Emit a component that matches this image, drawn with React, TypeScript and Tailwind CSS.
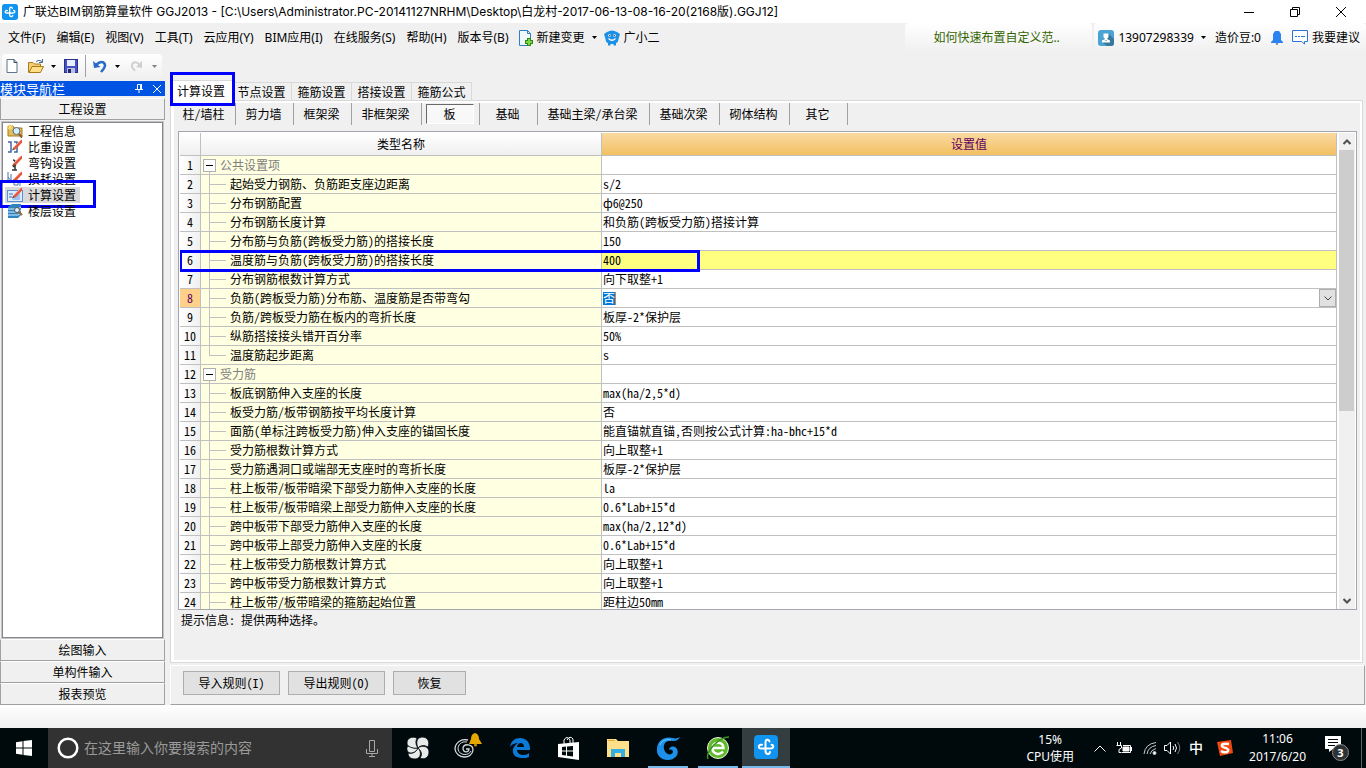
import type { ReactNode } from 'react';

type Row = { name: string; value?: string; group?: boolean; last?: boolean; marked?: boolean; editing?: boolean };

const menus = ['文件(F)', '编辑(E)', '视图(V)', '工具(T)', '云应用(Y)', 'BIM应用(I)', '在线服务(S)', '帮助(H)', '版本号(B)'];

const pages = ['节点设置', '箍筋设置', '搭接设置', '箍筋公式'];

const members = [
    { label: '柱/墙柱', width: 'w-[62px]' },
    { label: '剪力墙', width: 'w-[58px]' },
    { label: '框架梁', width: 'w-[58px]' },
    { label: '非框架梁', width: 'w-[70px]' },
    { label: '板', width: 'w-[58px]' },
    { label: '基础', width: 'w-[58px]' },
    { label: '基础主梁/承台梁', width: 'w-[112px]' },
    { label: '基础次梁', width: 'w-[70px]' },
    { label: '砌体结构', width: 'w-[70px]' },
    { label: '其它', width: 'w-[58px]' },
];

const rows: Row[] = [
    { name: '公共设置项', group: true },
    { name: '起始受力钢筋、负筋距支座边距离', value: 's/2' },
    { name: '分布钢筋配置', value: 'ф6@250' },
    { name: '分布钢筋长度计算', value: '和负筋(跨板受力筋)搭接计算' },
    { name: '分布筋与负筋(跨板受力筋)的搭接长度', value: '150' },
    { name: '温度筋与负筋(跨板受力筋)的搭接长度', value: '400', marked: true },
    { name: '分布钢筋根数计算方式', value: '向下取整+1' },
    { name: '负筋(跨板受力筋)分布筋、温度筋是否带弯勾', value: '否', editing: true },
    { name: '负筋/跨板受力筋在板内的弯折长度', value: '板厚-2*保护层' },
    { name: '纵筋搭接接头错开百分率', value: '50%' },
    { name: '温度筋起步距离', value: 's', last: true },
    { name: '受力筋', group: true },
    { name: '板底钢筋伸入支座的长度', value: 'max(ha/2,5*d)' },
    { name: '板受力筋/板带钢筋按平均长度计算', value: '否' },
    { name: '面筋(单标注跨板受力筋)伸入支座的锚固长度', value: '能直锚就直锚,否则按公式计算:ha-bhc+15*d' },
    { name: '受力筋根数计算方式', value: '向上取整+1' },
    { name: '受力筋遇洞口或端部无支座时的弯折长度', value: '板厚-2*保护层' },
    { name: '柱上板带/板带暗梁下部受力筋伸入支座的长度', value: 'la' },
    { name: '柱上板带/板带暗梁上部受力筋伸入支座的长度', value: '0.6*Lab+15*d' },
    { name: '跨中板带下部受力筋伸入支座的长度', value: 'max(ha/2,12*d)' },
    { name: '跨中板带上部受力筋伸入支座的长度', value: '0.6*Lab+15*d' },
    { name: '柱上板带受力筋根数计算方式', value: '向上取整+1' },
    { name: '跨中板带受力筋根数计算方式', value: '向上取整+1' },
    { name: '柱上板带/板带暗梁的箍筋起始位置', value: '距柱边50mm' },
];

function Caret({ className = 'text-black' }: { className?: string }) {
    return (
        <svg viewBox="0 0 5 3" className={`h-[3px] w-[5px] ${className}`} fill="currentColor">
            <path d="M0 0H5L2.5 3Z" />
        </svg>
    );
}

function GldLogo({ className }: { className: string }) {
    return (
        <svg viewBox="0 0 24 24" className={className} fill="none">
            <rect width="24" height="24" rx="4" fill="#1193f0" />
            <g stroke="#fff" strokeWidth="2" strokeLinecap="round">
                <path d="M15.500 6.500C15 4 11.500 4 11.500 7.500V16C11.500 19.500 15.500 20 16 17" />
                <path d="M8 9.800C4.500 9 3.500 13.500 7 13.500H16.500C20 13.500 20 10 17.500 9.800" />
            </g>
        </svg>
    );
}

function Pencil() {
    return (
        <g>
            <path d="M6 9L12 2.500L15 0.500V3.500L9 10Z" fill="#e8553a" />
            <path d="M7 8L13 2" stroke="#f7a48c" />
            <path d="M6 9L5 11.500L9 10Z" fill="#7b3a20" />
        </g>
    );
}

const navItems: { label: string; icon: ReactNode; active?: boolean }[] = [
    {
        label: '工程信息',
        icon: (
            <>
                <path d="M1 3H6L7 5H15V13H1Z" fill="#e6bd55" stroke="#a77a20" />
                <path d="M3 1V7M0 4H6M1 2L5 6M5 2L1 6" stroke="#ffe37a" />
                <circle cx="9.500" cy="8" r="3.500" fill="#d5ecfa" stroke="#4f6c86" />
                <path d="M12 11L15 14.500" stroke="#8a5a2a" strokeWidth="2" />
            </>
        ),
    },
    {
        label: '比重设置',
        icon: (
            <>
                <path d="M1 3H4V13H1M7 3H10V13H7" stroke="#3f66a8" fill="none" strokeWidth="1.500" />
                <Pencil />
            </>
        ),
    },
    {
        label: '弯钩设置',
        icon: (
            <>
                <path d="M6 5C9 5 8 8 8 9V15M5 15H10M6 12L9 10" stroke="#333" fill="none" strokeWidth="1.500" />
                <Pencil />
            </>
        ),
    },
    {
        label: '损耗设置',
        icon: (
            <>
                <path d="M1 1V12M1 6L4 10V3M7 8V14H11V10M13 9V15" stroke="#4d72a8" fill="none" />
                <Pencil />
            </>
        ),
    },
    {
        label: '计算设置',
        active: true,
        icon: (
            <>
                <rect x="0.500" y="3.500" width="15" height="11" fill="#dcecff" stroke="#5f8fd0" />
                <path d="M2 7H6M2 10H5" stroke="#3a6ebc" />
                <path d="M7 11L13 6V13H5" fill="#9cc2f1" />
                <Pencil />
            </>
        ),
    },
    {
        label: '楼层设置',
        icon: (
            <>
                <path d="M1 4L5 1H14V12L11 15H1Z" fill="#2f84c0" />
                <path d="M1 6H11L14 4M1 9H11L14 7M1 12H11L14 10" stroke="#d6efff" fill="none" />
                <circle cx="10" cy="7" r="2.500" fill="#e4f4ff" stroke="#555" />
                <path d="M12 9L15 12" stroke="#a2652a" strokeWidth="2" />
            </>
        ),
    },
];

function TitleBar() {
    return (
        <header className="flex h-[23px] shrink-0 items-center bg-white pl-0.5 pr-0.5">
            <GldLogo className="h-4 w-4" />
            <h1 className="ml-[5px] flex-1 truncate font-['Inter','Noto_Sans_CJK_SC',sans-serif] text-xs">
                广联达BIM钢筋算量软件 GGJ2013 - [C:\Users\Administrator.PC-20141127NRHM\Desktop\白龙村-2017-06-13-08-16-20(2168版).GGJ12]
            </h1>
            <button aria-label="最小化" className="flex w-[46px] justify-center">
                <svg viewBox="0 0 10 10" className="h-2.5 w-2.5" stroke="#000" fill="none">
                    <path d="M0 5.500H10" />
                </svg>
            </button>
            <button aria-label="还原" className="flex w-[46px] justify-center">
                <svg viewBox="0 0 10 10" className="h-2.5 w-2.5" stroke="#000" fill="none">
                    <path d="M0.500 2.500H7.500V9.500H0.500ZM2.500 2.500V0.500H9.500V7.500H7.500" />
                </svg>
            </button>
            <button aria-label="关闭" className="flex w-[46px] justify-center">
                <svg viewBox="0 0 10 10" className="h-2.5 w-2.5" stroke="#000" fill="none">
                    <path d="M0 0L10 10M10 0L0 10" />
                </svg>
            </button>
        </header>
    );
}

function MenuBar() {
    return (
        <div className="flex h-[29px] shrink-0 items-center text-xs">
            <nav className="flex items-center gap-[11px] whitespace-nowrap pl-2">
                {menus.map((menu) => (
                    <button key={menu}>{menu}</button>
                ))}
            </nav>
            <button className="ml-[9px] flex items-center whitespace-nowrap">
                <svg viewBox="0 0 16 16" className="h-4 w-4" fill="none">
                    <path d="M1.500 0.500H9.500L12.500 3.500V15.500H1.500Z" fill="#f0f8ff" stroke="#2f7fc0" />
                    <path d="M9.500 0.500V3.500H12.500" stroke="#2f7fc0" />
                    <path d="M11 8V16M7 12H15" stroke="#2f8a14" strokeWidth="4" />
                    <path d="M11 9V15M8 12H14" stroke="#7fd44a" strokeWidth="2" />
                </svg>
                <span className="ml-[3px]">新建变更</span>
            </button>
            <button aria-label="更多变更" className="ml-[7px]">
                <Caret />
            </button>
            <button className="ml-[7px] flex items-center whitespace-nowrap">
                <svg viewBox="0 0 16 16" className="h-4 w-4" fill="none">
                    <path d="M3 2Q8 -1 13 2L16 4L14.500 9Q14 13 12 13V15.500H9.500V14H6.500V15.500H4V13Q2 13 1.500 9L0 4Z" fill="#1d8fe6" />
                    <path d="M4.500 8.500Q8 12 11.500 8.500" stroke="#fff" strokeWidth="1.200" />
                    <circle cx="5.500" cy="5.500" r="1.300" fill="#fff" />
                    <circle cx="10.500" cy="5.500" r="1.300" fill="#fff" />
                    <circle cx="5.700" cy="5.600" r="0.700" fill="#123" />
                    <circle cx="10.300" cy="5.600" r="0.700" fill="#123" />
                </svg>
                <span className="ml-1">广小二</span>
            </button>
            <div className="ml-auto mr-0.5 flex h-full w-[187px] items-center rounded-t bg-linear-to-b from-white to-[#f0f0f0] pl-7">
                <a href="#tips" className="text-[#336600]">如何快速布置自定义范..</a>
            </div>
            <div className="flex h-full items-center whitespace-nowrap rounded-t bg-linear-to-b from-white to-[#f0f0f0] pl-1 pr-1.5">
                <svg viewBox="0 0 16 16" className="h-4 w-4">
                    <rect width="16" height="16" rx="3" fill="#4ba3d4" />
                    <path d="M10 3L16 9V13Q16 16 13 16H9L4 12Z" fill="#36789e" />
                    <path d="M5.500 3.500H10.500V7L9 9L12 10.500V12.500H4V10.500L7 9L5.500 7Z" fill="#fff" />
                    <path d="M7 10H9L8 11Z" fill="#36789e" />
                </svg>
                <button className="ml-1 flex items-center gap-[7px]">
                    13907298339
                    <Caret />
                </button>
                <span className="ml-[9px]">造价豆:0</span>
                <svg viewBox="0 0 12 14" className="ml-2.5 h-3.5 w-3" fill="#2a83f0">
                    <path d="M4 0H8L10 3V9L12 11V12H0V11L2 9V3Z" />
                    <path d="M4.500 12.500H7.500L6 14Z" fill="#123d80" />
                </svg>
                <svg viewBox="0 0 16 15" className="ml-[9px] h-[15px] w-4" fill="none" stroke="#2a75d5">
                    <path d="M0.500 0.500H15.500V11.500H12.500V14L9.500 11.500H0.500Z" fill="#fff" />
                    <path d="M3 6.500H5M6 6.500H8M9 6.500H13" />
                </svg>
                <a href="#feedback" className="ml-1">我要建议</a>
            </div>
        </div>
    );
}

function Toolbar() {
    return (
        <div className="flex h-7 shrink-0 items-center pl-0.5">
            <div className="flex h-6 items-center rounded-t bg-linear-to-b from-white to-[#f0f0f0] pl-1 pr-[5px]">
                <button aria-label="新建">
                    <svg viewBox="0 0 12 14" className="h-3.5 w-3" fill="none">
                        <path d="M1 0.500H8L11 3.500V13.500H1Z" fill="#fff" stroke="#5f738c" />
                        <path d="M8 0.500V3.500H11" stroke="#30435c" />
                    </svg>
                </button>
                <button aria-label="打开" className="ml-2.5">
                    <svg viewBox="0 0 16 14" className="h-3.5 w-4" fill="none">
                        <path d="M0.500 13.500V3.500H5L6.500 5H12.500V8" fill="#f2cf70" stroke="#a9791c" />
                        <path d="M1 13.500L4 7.500H15.500L12.500 13.500Z" fill="#ffdf86" stroke="#a9791c" />
                        <path d="M8 2.500Q11 0 14 2.500M14.500 0V3.500H11" stroke="#4a6f9c" />
                    </svg>
                </button>
                <button aria-label="最近文件" className="ml-[7px]">
                    <Caret />
                </button>
                <button aria-label="保存" className="ml-2">
                    <svg viewBox="0 0 14 14" className="h-3.5 w-3.5">
                        <rect x="0.500" y="0.500" width="13" height="13" fill="#4652c4" stroke="#2b2f86" />
                        <rect x="3" y="1" width="8" height="6" fill="#e9eeff" />
                        <rect x="3" y="9" width="8" height="5" fill="#b9c0da" />
                        <rect x="4" y="10" width="3" height="4" fill="#23276b" />
                    </svg>
                </button>
                <span className="ml-[7px] h-[22px] w-px bg-[#a0a0a0]" />
                <button aria-label="撤销" className="ml-[7px]">
                    <svg viewBox="0 0 14 13" className="h-[13px] w-3.5" fill="none">
                        <path d="M3 5Q7 1 10.500 2.500Q13.500 5 10.500 9L8 12" stroke="#2a69c8" strokeWidth="2.500" />
                        <path d="M0 1L1 8L7.500 7Z" fill="#2a69c8" />
                    </svg>
                </button>
                <button aria-label="撤销列表" className="ml-2">
                    <Caret />
                </button>
                <button aria-label="重做" className="ml-2.5">
                    <svg viewBox="0 0 14 13" className="h-[13px] w-3.5" fill="none">
                        <path d="M10 5Q6 1 3 3Q0.500 6 3.500 9L5 11" stroke="#d0d0d0" strokeWidth="2" />
                        <path d="M12 1L12 8L6 7Z" fill="#d0d0d0" />
                    </svg>
                </button>
                <button aria-label="重做列表" className="ml-2">
                    <Caret className="text-[#808080]" />
                </button>
            </div>
        </div>
    );
}

function Sidebar() {
    const section = 'h-[22px] w-full shrink-0 border border-t-white border-l-[#a0a0a0] border-r-[#a0a0a0] border-b-[#a0a0a0]';
    return (
        <aside className="flex w-[165px] shrink-0 flex-col pt-px">
            <div className="flex h-[15px] shrink-0 items-center bg-[#0054e3] text-[13px] leading-[15px] text-white">
                <h2 className="flex-1">模块导航栏</h2>
                <button aria-label="固定" className="mr-2.5">
                    <svg viewBox="0 0 8 9" className="h-[9px] w-2" stroke="#fff" fill="none">
                        <path d="M2.500 5V0.500H5.500V5M6.500 0V5M0 5.500H8M4 6V9" />
                    </svg>
                </button>
                <button aria-label="关闭导航" className="mr-1">
                    <svg viewBox="0 0 8 8" className="h-2 w-2" stroke="#fff">
                        <path d="M0 0L8 8M8 0L0 8" />
                    </svg>
                </button>
            </div>
            <button className={`mt-0.5 ${section}`}>工程设置</button>
            <ul className="mx-0.5 mt-0.5 flex-1 border border-[#828790] bg-white pl-0.5 ring-1 ring-[#c4c4c4]">
                {navItems.map((item) => (
                    <li key={item.label} className="relative flex h-4">
                        <button className={item.active ? 'flex h-4 items-center bg-[#d9d9d9] pl-0.5 pr-1' : 'flex h-4 items-center pl-0.5'}>
                            <svg viewBox="0 0 16 16" className="mr-[5px] h-4 w-4">
                                {item.icon}
                            </svg>
                            {item.label}
                        </button>
                        {item.active && (
                            <span className="pointer-events-none absolute -left-1.5 -top-[7px] h-7 w-[97px] border-3 border-[#0000ff]" />
                        )}
                    </li>
                ))}
            </ul>
            <button className={`mt-px ${section}`}>绘图输入</button>
            <button className={section}>单构件输入</button>
            <button className={section}>报表预览</button>
        </aside>
    );
}

function SettingRow({ row, index }: { row: Row; index: number }) {
    const line = 'border-b border-r border-[#c0c0c0] p-0';
    const valueBg = row.marked ? 'bg-[#ffff80]' : 'bg-white';
    return (
        <tr className="h-[19px]">
            <th
                scope="row"
                className={`${line} text-center font-normal ${row.editing ? 'bg-[#ffd08a] text-[#600060]' : 'bg-linear-to-r from-white to-[#f0f0f0]'}`}
            >
                {index}
            </th>
            <td className={`${line} relative bg-[#ffffe1]`}>
                <div className="flex h-[18px] items-center whitespace-nowrap">
                    {row.group ? (
                        <>
                            <span className="flex h-[18px] w-[15px] flex-col pl-0.5 pt-[3px]">
                                <button aria-label="折叠" className="flex h-[13px] w-[13px] shrink-0 items-center justify-center border border-[#b0b0b0] bg-white">
                                    <span className="h-px w-[7px] bg-black" />
                                </button>
                                <span className="ml-1.5 h-0.5 w-px bg-[#c0c0c0]" />
                            </span>
                            <span className="ml-1 text-[#808080]">{row.name}</span>
                        </>
                    ) : (
                        <>
                            <span className={`ml-2 flex h-[18px] w-[17px] flex-col border-[#c0c0c0] ${row.last ? '' : 'border-l'}`}>
                                <span className={`h-2.5 border-b border-[#c0c0c0] ${row.last ? 'border-l' : ''}`} />
                            </span>
                            <span className="ml-1">{row.name}</span>
                        </>
                    )}
                </div>
                {row.marked && (
                    <span className="pointer-events-none absolute -left-[22px] -right-[99px] -top-px z-10 h-[22px] border-3 border-[#0000ff]" />
                )}
            </td>
            <td className={`${line} ${valueBg}`}>
                {row.editing ? (
                    <div className="flex h-[18px] items-center justify-between pl-px">
                        <input
                            aria-label={row.name}
                            defaultValue={row.value}
                            className="h-[13px] w-[13px] border-r border-[#e08030] bg-[#0078d7] text-xs text-white outline-none"
                        />
                        <button aria-label="展开选项" className="flex h-[18px] w-[17px] items-center justify-center border border-[#adadad] bg-[#e1e1e1]">
                            <svg viewBox="0 0 8 5" className="h-[5px] w-2" fill="none" stroke="#444">
                                <path d="M0.500 0.500L4 4L7.500 0.500" />
                            </svg>
                        </button>
                    </div>
                ) : (
                    <div className="flex h-[18px] items-center whitespace-nowrap pl-px">{row.value}</div>
                )}
            </td>
        </tr>
    );
}

function SettingGrid() {
    return (
        <div className="ml-1 mr-[3px] flex min-h-0 flex-1 border border-[#a5a5ad] bg-white pl-px pt-px">
            <div className="min-w-0 flex-1 overflow-hidden">
                <table className="w-full table-fixed border-separate border-spacing-0 leading-[18px]">
                    <colgroup>
                        <col className="w-[21px]" />
                        <col className="w-[401px]" />
                        <col />
                    </colgroup>
                    <thead>
                        <tr className="h-[23px]">
                            <th className="border-b border-r border-[#c0c0c0] bg-linear-to-b from-white to-[#f0f0f0] p-0" />
                            <th className="border-b border-r border-[#c0c0c0] bg-linear-to-b from-white to-[#f0f0f0] p-0 font-normal">类型名称</th>
                            <th className="border-b border-r border-[#c0c0c0] bg-linear-to-b from-[#fad9a0] to-[#f2c060] p-0 font-normal text-[#600060]">设置值</th>
                        </tr>
                    </thead>
                    <tbody>
                        {rows.map((row, i) => (
                            <SettingRow key={i} row={row} index={i + 1} />
                        ))}
                    </tbody>
                </table>
            </div>
            <div className="ml-0.5 mr-px flex w-4 flex-col bg-[#f0f0f0]">
                <button aria-label="向上滚动" className="flex h-[17px] items-center justify-center">
                    <svg viewBox="0 0 8 6" className="h-1.5 w-2" fill="none" stroke="#505050" strokeWidth="2">
                        <path d="M0.500 5L4 1.500L7.500 5" />
                    </svg>
                </button>
                <div className="flex-1">
                    <div className="h-[59%] w-[15px] bg-[#cdcdcd]" />
                </div>
                <button aria-label="向下滚动" className="flex h-[17px] items-center justify-center">
                    <svg viewBox="0 0 8 6" className="h-1.5 w-2" fill="none" stroke="#505050" strokeWidth="2">
                        <path d="M0.500 1L4 4.500L7.500 1" />
                    </svg>
                </button>
            </div>
        </div>
    );
}

function Workspace() {
    const action = 'h-6 border border-[#adadad] bg-[#e1e1e1]';
    return (
        <main className="flex min-w-0 flex-1 flex-col pl-[5px]">
            <div className="flex h-5 shrink-0 items-start">
                <button className="relative z-10 h-6 w-[62px] border-t border-[#d9d9d9] bg-white pb-1">
                    计算设置
                    <span className="pointer-events-none absolute -top-[9px] left-0 h-[34px] w-[65px] border-3 border-[#0000ff]" />
                </button>
                {pages.map((page) => (
                    <button key={page} className="mt-0.5 h-[18px] w-[60px] border-r border-t border-[#d9d9d9]">
                        {page}
                    </button>
                ))}
            </div>
            <section className="mr-[3px] flex min-h-0 flex-1 flex-col border border-[#d9d9d9]">
                <div className="flex min-h-0 flex-1 flex-col border-2 border-l-3 border-white">
                    <div className="flex h-7 shrink-0 items-start">
                        {members.map((member) => (
                            <div key={member.label} className={`flex h-[22px] shrink-0 items-center justify-center border-r border-[#a0a0a0] pr-0.5 ${member.width}`}>
                                {member.label === '板' ? (
                                    <button
                                        aria-pressed="true"
                                        className="h-5 w-12 border border-b-white border-l-[#696969] border-r-white border-t-[#696969] bg-[#f8f8f8]"
                                    >
                                        {member.label}
                                    </button>
                                ) : (
                                    <button className="whitespace-nowrap">{member.label}</button>
                                )}
                            </div>
                        ))}
                    </div>
                    <SettingGrid />
                    <p className="h-[50px] shrink-0 pl-[7px] pt-px leading-[18px]">提示信息: 提供两种选择。</p>
                </div>
            </section>
            <div className="mr-px mt-0.5 flex h-10 shrink-0 items-start gap-2 border border-b-[#a0a0a0] border-l-white border-r-[#a0a0a0] border-t-white pl-3 pt-[5px]">
                <button className={`${action} w-[97px]`}>导入规则(I)</button>
                <button className={`${action} w-[97px]`}>导出规则(O)</button>
                <button className={`${action} w-[73px]`}>恢复</button>
            </div>
        </main>
    );
}

const taskApps: { label: string; running?: boolean; icon: ReactNode }[] = [
    {
        label: '风扇',
        icon: (
            <svg viewBox="0 0 22 22" className="h-[22px] w-[22px]">
                <g fill="#e8eaea" stroke="#000a0d" strokeWidth="0.800">
                    <path d="M11 11C7 12 0 11 0 6C0 1 5 -1 10 1C8 5 9 8 11 11Z" />
                    <path d="M11 11C9 6 9 1 15 0C21 0 23 5 21 10C17 8 14 8 11 11Z" />
                    <path d="M11 11C15 8 22 9 22 15C22 21 17 23 13 21C16 17 14 14 11 11Z" />
                    <path d="M11 11C15 15 14 22 8 22C3 22 1 19 1 16C6 17 9 15 11 11Z" />
                    <path d="M11 11C9 16 3 17 1 15C-1 12 0 10 1 9C5 11 8 12 11 11Z" />
                </g>
            </svg>
        ),
    },
    {
        label: '通知中心',
        icon: (
            <svg viewBox="0 0 28 26" className="mb-1 h-[26px] w-7" fill="none">
                <path d="M14 7C6 5 1 11 1 16C2 26 18 27 19 17C19 11 10 10 9 15C9 20 15 20 15 16H12" stroke="#d8dcdc" strokeWidth="1.300" />
                <path d="M13 9C7 8 4 12 4 16C5 23 15 23 17 18" stroke="#d8dcdc" />
                <path d="M21 0Q25 1 25 6L28 11H15L17 6Q17 1 21 0Z" fill="#e6a800" />
                <circle cx="21.500" cy="12" r="1.500" fill="#c88f00" />
            </svg>
        ),
    },
    {
        label: 'Edge',
        icon: (
            <svg viewBox="0 0 20 20" className="ml-1 h-5 w-5">
                <path d="M0 9C1 3 5 0 10 0C17 0 20 5 20 11V12H7C7 16 11 17 14 17C16 17 18 16 19 15V19C17 20 15 20 12 20C5 20 2 16 3 11C4 8 6 6 8 5C5 5 2 6 0 9ZM7 9H14C14 6 12 5 11 5C9 5 7 7 7 9Z" fill="#0a7ad6" fillRule="evenodd" />
            </svg>
        ),
    },
    {
        label: '应用商店',
        icon: (
            <svg viewBox="0 0 22 24" className="ml-0.5 h-6 w-[22px]">
                <path d="M0 8L21 6V24L0 21Z" fill="#fff" />
                <path d="M6 8V4Q9 -1 12 4V7M9 4Q12 -1 15 3V7" fill="none" stroke="#fff" />
                <path d="M4 11L8 10.500V14.500H4ZM9 10.500L15 10V14.500H9ZM4 15.500H8V19.500L4 19ZM9 15.500H15V20.500L9 19.700Z" fill="#000a0d" />
            </svg>
        ),
    },
    {
        label: '文件资源管理器',
        icon: (
            <svg viewBox="0 0 22 18" className="h-[18px] w-[22px]">
                <path d="M0 0H9L11 2H22V18H0Z" fill="#ffe08a" />
                <path d="M1 1H8V2H1Z" fill="#e6a931" />
                <path d="M4 10H18V18H14V14H8V18H4Z" fill="#35aee2" />
            </svg>
        ),
    },
    {
        label: '浏览器',
        running: true,
        icon: (
            <svg viewBox="0 0 24 24" className="h-6 w-6">
                <path d="M24 1C22 5 19 5 16 5C10 4 7 8 8 13C9 19 16 20 17 16C17 14 15 13 13 14C13 10 19 9 21 13C24 19 18 24 12 24C4 24 0 18 1 12C2 4 9 0 17 2C20 3 22 2 24 1Z" fill="#1d91ea" />
                <path d="M4 9C6 4 11 3 15 4" fill="none" stroke="#72cbff" />
            </svg>
        ),
    },
    {
        label: '360浏览器',
        running: true,
        icon: (
            <svg viewBox="0 0 24 24" className="h-6 w-6" fill="none">
                <circle cx="12" cy="12" r="10.500" fill="#62b92e" stroke="#e6f8d8" />
                <path d="M6.500 12H17.500C17.500 5 6.500 5 6.500 12C6.500 18.500 14 19.500 17 15.500" stroke="#fff" strokeWidth="2.500" />
                <path d="M2 23C-1 16 13 1 23 1" stroke="#3a941a" strokeWidth="1.500" />
            </svg>
        ),
    },
];

function Taskbar() {
    return (
        <footer className="flex h-10 shrink-0 bg-[#000a0d] font-['Noto_Sans','Noto_Sans_CJK_SC',sans-serif] text-xs text-white">
            <button aria-label="开始" className="flex w-12 items-center justify-center">
                <svg viewBox="0 0 16 16" className="h-4 w-4" fill="#fff">
                    <path d="M0 2.200L6.500 1.300V7.500H0ZM7.500 1.100L16 0V7.500H7.500ZM0 8.500H6.500V14.700L0 13.800ZM7.500 8.500H16V16L7.500 14.900Z" />
                </svg>
            </button>
            <div className="flex w-[344px] items-center bg-[#323232] pl-[9px] pr-3.5">
                <svg viewBox="0 0 22 22" className="h-[22px] w-[22px]" fill="none">
                    <circle cx="11" cy="11" r="9.300" stroke="#fff" strokeWidth="2.500" />
                </svg>
                <input
                    aria-label="搜索"
                    placeholder="在这里输入你要搜索的内容"
                    className="ml-[5px] min-w-0 flex-1 bg-transparent text-sm outline-none placeholder:text-[#9a9a9a]"
                />
                <svg viewBox="0 0 12 17" className="h-[17px] w-3" fill="none" stroke="#a8a8a8">
                    <path d="M3.500 0.500H8.500V11.500H3.500ZM0.500 9V13.500H11.500V9M6 13.500V16.500M3 16.500H9" />
                </svg>
            </div>
            <div className="ml-0.5 flex gap-0.5">
                {taskApps.map((app) => (
                    <button
                        key={app.label}
                        aria-label={app.label}
                        className="relative flex w-12 items-center justify-center"
                    >
                        {app.icon}
                        {app.running && <span className="absolute inset-x-1 bottom-0 h-0.5 bg-[#76b9ed]" />}
                    </button>
                ))}
            </div>
            <button aria-label="广联达" className="flex w-12 items-center justify-center border-b-2 border-[#76b9ed] bg-[#343d3f]">
                <GldLogo className="h-6 w-6" />
            </button>
            <div className="ml-auto flex items-center">
                <div className="text-center leading-[17px]">
                    15%
                    <br />
                    CPU使用
                </div>
                <svg viewBox="0 0 12 7" className="ml-5 h-[7px] w-3" fill="none" stroke="#fff">
                    <path d="M0.500 6.500L6 1L11.500 6.500" />
                </svg>
                <svg viewBox="0 0 16 12" className="ml-2.5 h-3 w-4" fill="none" stroke="#fff">
                    <path d="M1.500 0V3M4.500 0V3M0.500 3.500H5.500V6L3 7.500V10.500H5M7 3.500H14.500V10.500H5.500" />
                    <path d="M7 5H13V9H7Z" fill="#fff" />
                    <path d="M15.500 5V9" />
                </svg>
                <svg viewBox="0 0 14 14" className="ml-[11px] h-3.5 w-3.5" fill="none" stroke="#c8cccc">
                    <path d="M1 13Q2 3 13 1.500M4 13Q5 6 13 4.500M7 13Q8 9 13 7.500" />
                    <circle cx="11.500" cy="12" r="1.500" fill="#fff" />
                </svg>
                <svg viewBox="0 0 17 14" className="ml-[7px] h-3.5 w-[17px]" fill="none" stroke="#fff">
                    <path d="M0.500 4.500H3L6.500 1V13L3 9.500H0.500Z" />
                    <path d="M9 5Q10.500 7 9 9M11 3Q14 7 11 11" />
                    <path d="M13.500 1Q18 7 13.500 13" stroke="#777" />
                </svg>
                <span className="ml-2 text-sm font-medium">中</span>
                <svg viewBox="0 0 16 16" className="ml-3.5 h-4 w-4" fill="none">
                    <path d="M0 2L14 0L16 13L3 16Z" fill="#f2480f" />
                    <path d="M12 4Q4 3 5 6Q5 7 9 8Q13 10 10 12Q7 13 4 11" stroke="#fff" strokeWidth="2.500" />
                </svg>
                <div className="ml-4 text-center leading-[18px]">
                    11:06
                    <br />
                    2017/6/20
                </div>
                <button aria-label="操作中心" className="ml-[19px]">
                    <svg viewBox="0 0 24 25" className="h-[25px] w-6">
                        <path d="M0 0H16V13H8L4 16V13H0Z" fill="#fff" />
                        <path d="M3 3.500H13M3 6.500H13M3 9.500H10" stroke="#000a0d" />
                        <circle cx="15.500" cy="16.500" r="8" fill="#2e3234" stroke="#888" />
                        <text x="15.500" y="20.500" textAnchor="middle" fill="#fff" fontSize="11" fontWeight="bold">3</text>
                    </svg>
                </button>
                <span className="ml-3 mr-1 h-10 w-px bg-[#5c6466]" />
            </div>
        </footer>
    );
}

export default function App() {
    return (
        <div className="flex h-screen flex-col overflow-hidden bg-[#f0f0f0] font-['Noto_Sans','Noto_Sans_CJK_SC',sans-serif] text-black">
            <TitleBar />
            <MenuBar />
            <Toolbar />
            <div className="flex min-h-0 flex-1 font-['Noto_Sans_Mono_CJK_SC','Noto_Sans_CJK_SC',monospace] text-xs">
                <Sidebar />
                <Workspace />
            </div>
            <div className="h-[23px] shrink-0 bg-linear-to-b from-white to-[#f0f0f0]" />
            <Taskbar />
        </div>
    );
}
